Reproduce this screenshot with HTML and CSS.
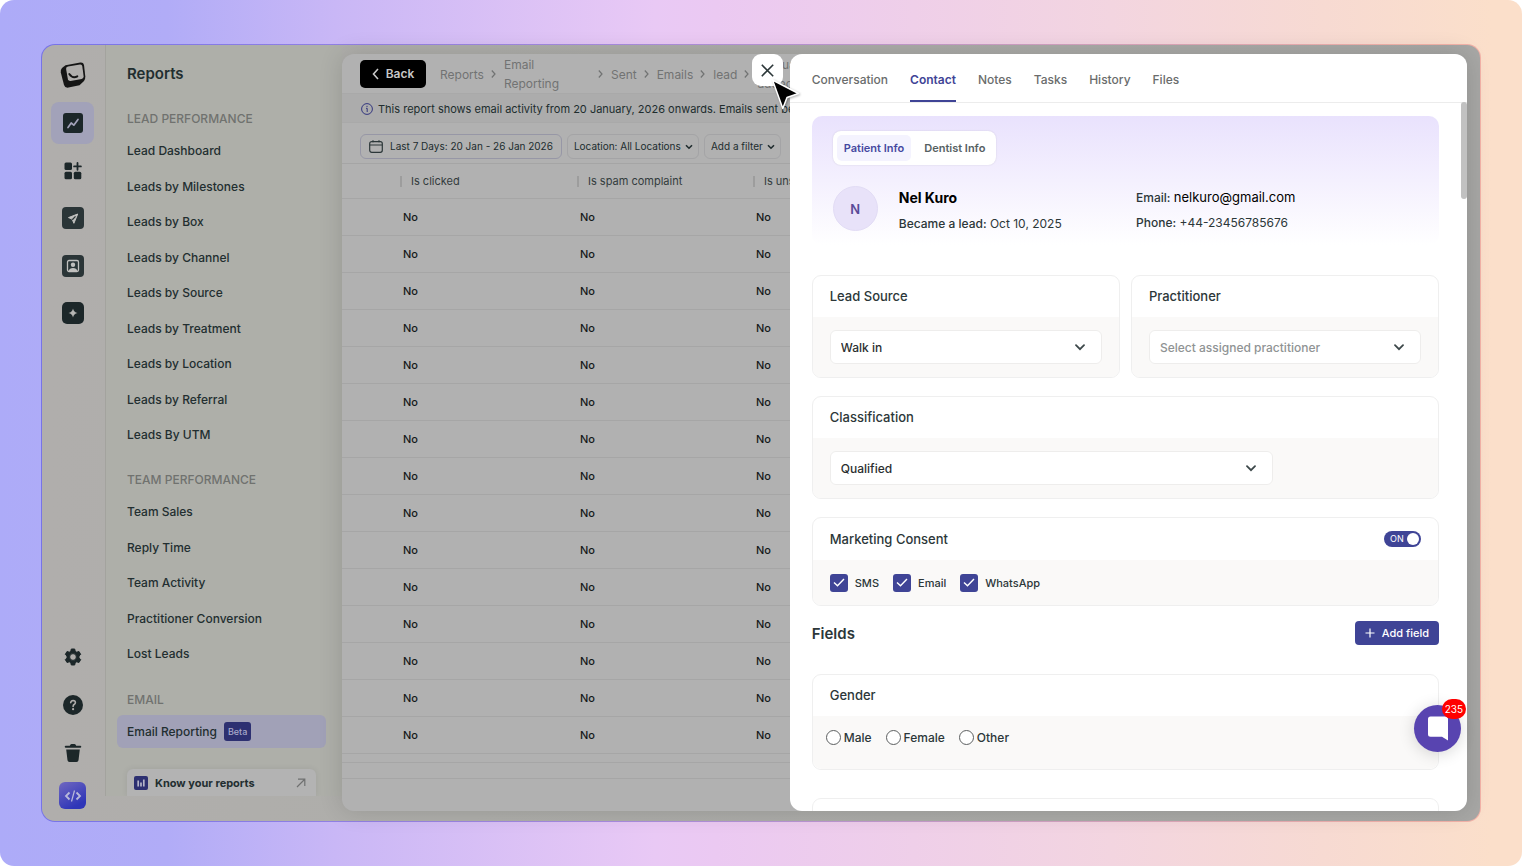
FILE: index.html
```html
<!DOCTYPE html>
<html lang="en">
<head>
<meta charset="utf-8">
<meta name="viewport" content="width=device-width, initial-scale=1">
<title>Reports</title>
<link rel="stylesheet" href="styles.css">
</head>
<body>
<div class="stage">
<div class="window">

<nav class="rail" aria-label="Main">
  <a class="rail-logo" href="#" aria-label="Home">
    <svg width="26" height="28" viewBox="0 0 26 28"><path d="M5.5 4.2 20.3 1.6Q23.3 1.2 24 4L25.3 15.500Q25.500 18 24 20L19.500 24.300 8.500 26.600Q5 27.200 4 24L.8 11.500Q.3 8.500 2 7Z" fill="#151515"/><path d="M8 5.600 20 3.500Q22 3.300 22.300 5.200L23.600 15.300Q23.700 17.500 21.700 18L10.500 20Q8.400 20.200 7.900 18.200L6.100 8Q6 6 8 5.600Z" fill="#b0aeac"/><path d="M9.300 13q3.500 5 8 2.300" fill="none" stroke="#151515" stroke-width="2" stroke-linecap="round"/></svg>
  </a>
  <div class="rail-top">
    <a class="rail-item is-active" href="#" aria-label="Reports">
      <svg width="20" height="20" viewBox="0 0 20 20"><rect width="20" height="20" rx="3" fill="#1c2729"/><path d="M5 14.500 8.200 10l2.600 2.200L15 6.500" fill="none" stroke="#a2a2b9" stroke-width="1.700" stroke-linecap="round" stroke-linejoin="round"/></svg>
    </a>
    <a class="rail-item" href="#" aria-label="Apps">
      <svg width="18" height="18" viewBox="0 0 18 18" fill="#1c2729"><rect x=".5" y=".5" width="7.500" height="7.500" rx="1.500"/><rect x=".5" y="9.800" width="7.500" height="7.500" rx="1.500"/><rect x="9.800" y="9.800" width="7.500" height="7.500" rx="1.500"/><path d="M13.500 1v6.800M10.100 4.400h6.800" stroke="#1c2729" stroke-width="1.800" stroke-linecap="round"/></svg>
    </a>
    <a class="rail-item" href="#" aria-label="Campaigns">
      <svg width="22" height="22" viewBox="0 0 22 22"><rect width="22" height="22" rx="4" fill="#2a3537"/><path d="M15.700 7 6.500 10.600l3.600 1.500 1.800 4.200Z" fill="#c0c0be" stroke="#c0c0be" stroke-linejoin="round"/><path d="m10.300 12.700 3.200-3.300" stroke="#2a3537" stroke-width="1.300"/></svg>
    </a>
    <a class="rail-item" href="#" aria-label="Contacts">
      <svg width="22" height="22" viewBox="0 0 22 22"><rect width="22" height="22" rx="4" fill="#2a3537"/><rect x="5.500" y="5.500" width="11" height="11" rx="1.500" fill="none" stroke="#c0c0be" stroke-width="1.300"/><circle cx="11" cy="9.800" r="2.200" fill="#c0c0be"/><path d="M6.500 16q1-3 4.500-3t4.500 3Z" fill="#c0c0be"/></svg>
    </a>
    <a class="rail-item" href="#" aria-label="Assistant">
      <svg width="22" height="22" viewBox="0 0 22 22"><rect width="22" height="22" rx="5" fill="#1c2729"/><path d="M11 6.500q.8 3.700 4.500 4.500-3.700.8-4.500 4.500-.8-3.700-4.500-4.500 3.700-.8 4.500-4.500Z" fill="#b5b5b3"/></svg>
    </a>
  </div>
  <div class="rail-bottom">
    <a class="rail-tool" href="#" aria-label="Settings">
      <svg width="18" height="18" viewBox="0 0 18 18"><path fill="#1c2729" fill-rule="evenodd" stroke="#1c2729" stroke-linejoin="round" d="M7.300 1h3.400l.5 2.300 1.500.9 2.300-.7 1.700 2.900-1.700 1.600v1.900l1.700 1.700-1.700 2.900-2.300-.7-1.500.9-.5 2.300H7.300l-.5-2.300-1.500-.9-2.300.7-1.700-2.900L3 9.900V8L1.300 6.400 3 3.500l2.300.7 1.500-.9ZM9 5.600a3.400 3.400 0 1 0 0 6.800 3.400 3.400 0 1 0 0-6.800Z"/></svg>
    </a>
    <a class="rail-tool" href="#" aria-label="Help">
      <svg width="20" height="20" viewBox="0 0 20 20"><circle cx="10" cy="10" r="10" fill="#1c2729"/><path d="M7.700 7.700q.3-2.200 2.400-2.200 2.300.1 2.300 2.100 0 1.200-1.300 1.900-1 .6-1 1.900" fill="none" stroke="#b0aeac" stroke-width="1.600" stroke-linecap="round"/><circle cx="10.100" cy="14.200" r="1.100" fill="#b0aeac"/></svg>
    </a>
    <a class="rail-tool" href="#" aria-label="Trash">
      <svg width="18" height="18" viewBox="0 0 18 18" fill="#1c2729"><path d="M2.200 5.500h13.600l-1.300 10.700q-.2 1.800-2 1.800h-7q-1.800 0-2-1.800Z"/><path d="M1.500 1.700h4.300Q6.300 0 7.500 0h3q1.200 0 1.700 1.700h4.300q.8.300.8 1t-.8 1h-15q-.8-.3-.8-1t.8-1Z"/></svg>
    </a>
    <a class="rail-code" href="#" aria-label="Developer">
      <svg width="18" height="14" viewBox="0 0 18 14" fill="none" stroke="#b9bada" stroke-width="1.800"><path d="M5.500 3.500 2 7l3.500 3.500M12.500 3.500 16 7l-3.500 3.500"/><path d="M10.500 1.500 7.500 12.500" stroke-width="1.200"/></svg>
    </a>
  </div>
</nav>

<aside class="sidebar">
  <h1 class="sidebar-title">Reports</h1>
  <h2 class="group-title">LEAD PERFORMANCE</h2>
  <ul class="group group-leads">
    <li><a href="#">Lead Dashboard</a></li>
    <li><a href="#">Leads by Milestones</a></li>
    <li><a href="#">Leads by Box</a></li>
    <li><a href="#">Leads by Channel</a></li>
    <li><a href="#">Leads by Source</a></li>
    <li><a href="#">Leads by Treatment</a></li>
    <li><a href="#">Leads by Location</a></li>
    <li><a href="#">Leads by Referral</a></li>
    <li><a href="#">Leads By UTM</a></li>
  </ul>
  <h2 class="group-title">TEAM PERFORMANCE</h2>
  <ul class="group group-team">
    <li><a href="#">Team Sales</a></li>
    <li><a href="#">Reply Time</a></li>
    <li><a href="#">Team Activity</a></li>
    <li><a href="#">Practitioner Conversion</a></li>
    <li><a href="#">Lost Leads</a></li>
  </ul>
  <h2 class="group-title">EMAIL</h2>
  <ul class="group group-email">
    <li><a class="is-active" href="#">Email Reporting <span class="beta">Beta</span></a></li>
  </ul>
  <a class="know" href="#">
    <svg width="14" height="14" viewBox="0 0 14 14"><rect width="14" height="14" rx="2" fill="#2d3071"/><path d="M4.200 4.500v6M7 6.500v4M9.800 3.500v7" stroke="#b5b5c8" stroke-width="1.700"/></svg>
    <span>Know your reports</span>
    <svg width="10" height="10" viewBox="0 0 10 10" fill="none" stroke="#6f7070" stroke-width="1.200"><path d="M1 9 8.500 1.500M2 1.200h6.800V8"/></svg>
  </a>
</aside>

<main class="report">
  <header class="crumbs">
    <button class="back" type="button"><svg width="7" height="12" viewBox="0 0 7 12" fill="none" stroke="#c8c8c8" stroke-width="1.600"><path d="M6 1 1.500 6 6 11"/></svg>Back</button>
    <a href="#">Reports</a>
    <svg class="sep" viewBox="0 0 5 8"><path d="m.8.500 3.200 3.500L.8 7.500"/></svg>
    <a class="crumb-wide" href="#">Email Reporting</a>
    <svg class="sep" viewBox="0 0 5 8"><path d="m.8.500 3.200 3.500L.8 7.500"/></svg>
    <a href="#">Sent</a>
    <svg class="sep" viewBox="0 0 5 8"><path d="m.8.500 3.200 3.500L.8 7.500"/></svg>
    <a href="#">Emails</a>
    <svg class="sep" viewBox="0 0 5 8"><path d="m.8.500 3.200 3.500L.8 7.500"/></svg>
    <a href="#">lead</a>
    <svg class="sep" viewBox="0 0 5 8"><path d="m.8.500 3.200 3.500L.8 7.500"/></svg>
    <a class="crumb-last" href="#">Manually added</a>
  </header>
  <p class="notice">
    <svg width="12" height="12" viewBox="0 0 12 12" fill="none" stroke="#33367f"><circle cx="6" cy="6" r="5.400"/><path d="M5 5.300h1.200V9M6 2.800v1.200"/></svg>
    <span>This report shows email activity from 20 January, 2026 onwards. Emails sent before</span>
  </p>
  <div class="filters">
    <button class="filter filter-date" type="button"><svg width="14" height="13" viewBox="0 0 14 13" fill="none" stroke="#2c3739" stroke-width="1.200"><rect x=".7" y="1.700" width="12.600" height="10.600" rx="2"/><path d="M.7 5h12.600M4 .2v2M10 .2v2"/></svg>Last 7 Days: 20 Jan - 26 Jan 2026</button>
    <span class="filter-pick filter-location">
      <select class="filter" aria-label="Location"><option>Location: All Locations</option></select>
      <svg class="mini-chev" viewBox="0 0 8 6"><path d="m1 1.200 3 3 3-3"/></svg>
    </span>
    <span class="filter-pick">
      <select class="filter" aria-label="Add a filter"><option>Add a filter</option></select>
      <svg class="mini-chev" viewBox="0 0 8 6"><path d="m1 1.200 3 3 3-3"/></svg>
    </span>
  </div>
  <table class="grid">
    <colgroup><col class="c-lead"><col class="c-a"><col class="c-b"><col></colgroup>
    <thead><tr><th></th><th><span>Is clicked</span></th><th><span>Is spam complaint</span></th><th><span>Is unsubscribed</span></th></tr></thead>
    <tbody>
      <tr><td></td><td>No</td><td>No</td><td>No</td></tr>
      <tr><td></td><td>No</td><td>No</td><td>No</td></tr>
      <tr><td></td><td>No</td><td>No</td><td>No</td></tr>
      <tr><td></td><td>No</td><td>No</td><td>No</td></tr>
      <tr><td></td><td>No</td><td>No</td><td>No</td></tr>
      <tr><td></td><td>No</td><td>No</td><td>No</td></tr>
      <tr><td></td><td>No</td><td>No</td><td>No</td></tr>
      <tr><td></td><td>No</td><td>No</td><td>No</td></tr>
      <tr><td></td><td>No</td><td>No</td><td>No</td></tr>
      <tr><td></td><td>No</td><td>No</td><td>No</td></tr>
      <tr><td></td><td>No</td><td>No</td><td>No</td></tr>
      <tr><td></td><td>No</td><td>No</td><td>No</td></tr>
      <tr><td></td><td>No</td><td>No</td><td>No</td></tr>
      <tr><td></td><td>No</td><td>No</td><td>No</td></tr>
      <tr><td></td><td>No</td><td>No</td><td>No</td></tr>
    </tbody>
  </table>
  <div class="grid-foot"></div>
</main>

<section class="drawer" aria-label="Lead details">
  <button class="close" type="button" aria-label="Close"><svg width="13" height="13" viewBox="0 0 13 13" stroke="#2c3739" stroke-width="1.600"><path d="m.8.800 11.400 11.400M12.200.8.800 12.200"/></svg></button>
  <svg class="cursor" width="34" height="38" viewBox="0 0 34 38"><path d="M4.500 4 30.500 17.500 19 21.500 14.800 32.500Z" fill="#000" stroke="#fff" stroke-width="1.500" stroke-linejoin="round"/></svg>
  <div class="drawer-panel">
  <nav class="tabs" aria-label="Lead sections">
    <a href="#">Conversation</a>
    <a class="is-active" href="#">Contact</a>
    <a href="#">Notes</a>
    <a href="#">Tasks</a>
    <a href="#">History</a>
    <a href="#">Files</a>
  </nav>
  <div class="drawer-body">
    <div class="hero">
      <div class="segment">
        <button class="is-active" type="button">Patient Info</button>
        <button type="button">Dentist Info</button>
      </div>
      <div class="person">
        <span class="avatar">N</span>
        <div class="facts">
          <h2>Nel Kuro</h2>
          <p><b>Became a lead:</b> Oct 10, 2025</p>
        </div>
        <div class="facts">
          <p><b>Email:</b> <span class="mail">nelkuro@gmail.com</span></p>
          <p><b>Phone:</b> +44-23456785676</p>
        </div>
      </div>
    </div>

    <div class="pair">
      <div class="card">
        <label class="card-head" for="source">Lead Source</label>
        <div class="card-body">
          <div class="select"><select id="source"><option>Walk in</option></select><svg class="chev" viewBox="0 0 10 7"><path d="m1 1.200 4 4 4-4"/></svg></div>
        </div>
      </div>
      <div class="card">
        <label class="card-head" for="practitioner">Practitioner</label>
        <div class="card-body">
          <div class="select is-empty"><select id="practitioner"><option>Select assigned practitioner</option></select><svg class="chev" viewBox="0 0 10 7"><path d="m1 1.200 4 4 4-4"/></svg></div>
        </div>
      </div>
    </div>

    <div class="card">
      <label class="card-head" for="class">Classification</label>
      <div class="card-body">
        <div class="select select-part"><select id="class"><option>Qualified</option></select><svg class="chev" viewBox="0 0 10 7"><path d="m1 1.200 4 4 4-4"/></svg></div>
      </div>
    </div>

    <div class="card consent">
      <label class="card-head">Marketing Consent
        <span class="switch"><input type="checkbox" role="switch" checked><span>ON</span></span>
      </label>
      <div class="card-body checks">
        <label><span class="tick"><input type="checkbox" checked><svg viewBox="0 0 12 9"><path d="m1 4.500 3.500 3.300L11 1"/></svg></span>SMS</label>
        <label><span class="tick"><input type="checkbox" checked><svg viewBox="0 0 12 9"><path d="m1 4.500 3.500 3.300L11 1"/></svg></span>Email</label>
        <label><span class="tick"><input type="checkbox" checked><svg viewBox="0 0 12 9"><path d="m1 4.500 3.500 3.300L11 1"/></svg></span>WhatsApp</label>
      </div>
    </div>

    <div class="fields">
      <h2>Fields</h2>
      <button class="add" type="button"><svg width="10" height="10" viewBox="0 0 10 10" stroke="#fff" stroke-width="1.200"><path d="M5 .5v9M.5 5h9"/></svg>Add field</button>
    </div>

    <fieldset class="card gender">
      <legend class="card-head">Gender</legend>
      <div class="card-body radios">
        <label><input type="radio" name="gender">Male</label>
        <label><input type="radio" name="gender">Female</label>
        <label><input type="radio" name="gender">Other</label>
      </div>
    </fieldset>

    <div class="card next"><div class="card-head"></div></div>
  </div>
  </div>
  <div class="thumb"></div>
  <button class="chat" type="button" aria-label="Chat">
    <svg width="22" height="25" viewBox="0 0 22 25"><path d="M3.500.5h15q2.500 0 2.500 2.500v21.500l-6-3.700H3.500Q1 20.800 1 18.300V3Q1 .5 3.500.500Z" fill="#fff"/></svg>
    <span class="count">235</span>
  </button>
</section>

</div>
</div>
</body>
</html>
```
FILE: styles.css
```css
* { box-sizing: border-box; }
body { margin: 0; background: #fff; font-family: Inter, "Liberation Sans", sans-serif; font-size: 12px; color: #2c3739; }
a { color: inherit; text-decoration: none; }
h1, h2, p, ul { margin: 0; padding: 0; }
ul { list-style: none; }
button, select, input { font: inherit; color: inherit; margin: 0; }
button { border: 0; padding: 0; background: none; cursor: pointer; }
svg { display: block; flex: none; }

.stage {
  height: 100vh; min-height: 866px; padding: 44px 41px; border-radius: 14px; display: flex;
  background: linear-gradient(90deg, #adabf8, #b1acf7 11%, #c9b7f6 22%, #e9c9f5 43%, #ebc9f2 47%, #f3d5e0 73%, #f7dad2 87%, #fbdfca 98%);
}
.window {
  position: relative; flex: 1; display: flex; padding-right: 13px; border: 1px solid transparent; border-radius: 14px;
  background:
    linear-gradient(90deg, #b0aeac, #aeaeaa 30%, #a7a7a5) padding-box,
    linear-gradient(90deg, #7773e8, #a98ce0 40%, #f3b2a8 95%) border-box;
}

/* icon rail */
.rail { width: 63px; flex: none; display: flex; flex-direction: column; align-items: center; padding: 16px 2px 12px 0; }
.rail-logo { height: 41px; }
.rail-top { height: 232px; display: flex; flex-direction: column; justify-content: space-between; }
.rail-item { width: 43px; height: 42px; border-radius: 8px; display: grid; place-items: center; }
.rail-item.is-active { background: #a2a2b9; }
.rail-bottom { margin-top: auto; display: flex; flex-direction: column; align-items: center; }
.rail-tool { width: 42px; height: 48px; display: grid; place-items: center; }
.rail-code { width: 27px; height: 27px; margin-top: 5px; border-radius: 6px; display: grid; place-items: center; background: linear-gradient(150deg, #7068c0, #2f36b8 80%); }

/* report list */
.sidebar {
  width: 237px; flex: none; display: flex; flex-direction: column; margin-bottom: 25px; padding: 0 16px 0 11px; overflow: hidden;
  background: #aeafa9; border-left: 1px solid #a3a39e; color: #222e30; font-weight: 500;
}
.sidebar-title { padding: 19px 10px 0; height: 60px; font-size: 15px; line-height: 20px; font-weight: 600; }
.group-title { padding: 0 10px; height: 28px; line-height: 28px; font-size: 12px; font-weight: 500; color: #70726f; }
.group { display: flex; flex-direction: column; margin-bottom: 14px; }
.group-leads { flex: 9 0 0; }
.group-team { flex: 5 0 0; }
.group-email { flex: 1 0 0; margin-bottom: 20px; }
.group li { flex: 1 0 35px; display: flex; }
.group a { flex: 1; display: flex; align-items: center; gap: 7px; padding: 0 10px; margin: 1px 0; border-radius: 6px; }
.group a.is-active { background: #a1a1b7; }
.beta { padding: 0 4px; height: 19px; line-height: 19px; border-radius: 3px; background: #2d3071; color: #a9a9cb; font-size: 9px; }
.know {
  flex: none; height: 27px; margin: 0 10px; padding: 1px 10px 0 7px; display: flex; align-items: center; gap: 7px; border-radius: 6px 6px 0 0;
  background: #b3b3b3; box-shadow: 0 0 6px rgba(0, 0, 0, .08); font-size: 11px; font-weight: 700;
}
.know span { flex: 1; }

/* report page */
.report {
  flex: 1; min-width: 0; margin: 9px 0 10px; border-radius: 12px; overflow: hidden; background: #b1b1b1;
  box-shadow: 0 0 24px rgba(0, 0, 0, .14);
}
.crumbs { height: 40px; padding-left: 18px; display: flex; align-items: center; line-height: 19px; color: #717373; border-bottom: 1px solid #a9a9a9; }
.crumbs a { flex: none; padding-top: 1px; }
.back { width: 66px; height: 28px; margin-right: 14px; border-radius: 5px; background: #000; color: #c8c8c8; display: flex; align-items: center; justify-content: center; gap: 7px; font-size: 12px; font-weight: 600; }
.sep { width: 5px; height: 8px; margin: 0 8px 0 7px; fill: none; stroke: #717373; stroke-width: 1.200; }
.crumb-wide { width: 87px; }
.crumbs .crumb-last { width: 60px; }
.notice { height: 29px; padding: 1px 0 0 19px; display: flex; align-items: center; gap: 5px; background: #acacac; border-bottom: 1px solid #a9a9a9; font-size: 11px; white-space: nowrap; color: #202c2e; }
.filters { height: 41px; padding: 6px 18px 0; display: flex; align-items: center; gap: 5px; border-bottom: 1px solid #a5a5a5; font-size: 10px; color: #202c2e; }
.filter { height: 25px; border: 1px solid #a4a4a6; border-radius: 6px; background: #b1b1b1; display: flex; align-items: center; gap: 7px; padding: 0 8px; white-space: nowrap; }
.filter-date { border-color: #9797a6; }
.filter-pick { position: relative; }
.filter-pick select { appearance: none; padding: 0 17px 0 6px; }
.mini-chev { position: absolute; right: 6px; top: 10px; width: 8px; height: 6px; fill: none; stroke: #202c2e; stroke-width: 1.600; pointer-events: none; }
.grid { width: 100%; table-layout: fixed; border-collapse: collapse; }
.c-lead { width: 58px; }
.c-a { width: 177px; }
.c-b { width: 176px; }
.grid th { height: 34px; padding: 1px 0 0; text-align: left; font-size: 11px; font-weight: 400; color: #333c3d; }
.grid th span { display: block; line-height: 11px; padding-left: 9px; border-left: 2px solid #9d9d9d; }
.grid td { height: 37px; padding: 0 0 0 3px; font-size: 11px; line-height: 14px; font-weight: 500; color: #15191a; }
.grid tr { border-bottom: 1px solid #a6a6a6; }
.grid-foot { height: 25px; border-bottom: 1px solid #a6a6a6; background: linear-gradient(#a6a6a6, #a6a6a6) 0 8px / 100% 1px no-repeat; }

/* lead drawer, laid over the report */
.drawer { position: absolute; top: 9px; bottom: 10px; left: 52%; right: 13px; }
.drawer-panel { height: 100%; border-radius: 12px; background: #fff; overflow: hidden; }
.close { position: absolute; left: -38px; top: 0; width: 31px; height: 32px; border-radius: 9px; background: #fff; display: grid; place-items: center; }
.cursor { position: absolute; left: -22px; top: 22px; filter: drop-shadow(1px 1px 1px rgba(0, 0, 0, .3)); }
.thumb { position: absolute; right: 0; top: 48px; width: 6px; height: 97px; border-radius: 3px; background: #c1c1c1; }
.tabs { height: 49px; padding-left: 22px; display: flex; gap: 22px; border-bottom: 1px solid #ececec; font-weight: 500; color: #6a6c6c; }
.tabs a { height: 48px; line-height: 52px; border-bottom: 2px solid transparent; }
.tabs a.is-active { color: #3f4496; border-color: #3f4496; font-weight: 600; }
.drawer-body { padding: 13px 28px 0 22px; }
.hero { height: 129px; margin-bottom: 30px; padding: 15px 21px 0; border-radius: 10px; background: linear-gradient(#e9e2fd, #f4f0fe 50%, #fff); }
.segment { width: fit-content; height: 34px; padding: 4px; border-radius: 8px; background: #fff; display: flex; box-shadow: 0 0 2px rgba(0, 0, 0, .12); }
.segment button { padding: 0 7px; border-radius: 5px; font-size: 11px; font-weight: 600; color: #566163; }
.segment button + button { margin-left: 6px; }
.segment .is-active { background: #f4f3fe; color: #4549a0; }
.person { margin-top: 21px; display: grid; grid-template-columns: 45px 1fr 282px; }
.avatar { width: 45px; height: 45px; border-radius: 50%; background: #e8e2f9; border: 1px solid #e2dcf5; color: #594b98; font-size: 13px; font-weight: 600; display: grid; place-items: center; }
.facts { margin: -1px 0 0 21px; font-size: 12px; line-height: 25px; white-space: nowrap; }
.facts + .facts { margin-left: 0; }
.facts h2 { font-size: 14px; line-height: 26px; font-weight: 700; color: #000; }
.facts b { font-weight: 500; }
.facts .mail { font-size: 13px; color: #000; }
.pair { display: grid; grid-template-columns: 1fr 1fr; gap: 11px; }
.card { display: block; margin: 0 0 18px; padding: 0; min-width: 0; border: 1px solid #efefef; border-radius: 9px; overflow: hidden; }
.card-head { height: 41px; padding: 0 17px 2px; display: flex; align-items: center; justify-content: space-between; font-size: 13px; font-weight: 500; }
legend.card-head { float: left; width: 100%; }
.card-body { clear: both; padding: 13px 17px; background: #faf9f8; }
.select { position: relative; }
.select-part { width: 75%; }
.select select { appearance: none; display: block; width: 100%; height: 34px; padding: 0 10px; border: 1px solid #eeedec; border-radius: 6px; background: #fff; font-size: 12px; font-weight: 500; color: #2b2f30; }
.select.is-empty select { color: #8f9394; }
.chev { position: absolute; right: 17px; top: 14px; width: 10px; height: 7px; fill: none; stroke: #3d484a; stroke-width: 1.800; stroke-linecap: round; pointer-events: none; }
.consent { margin-bottom: 15px; }
.consent .card-head { height: 42px; padding-bottom: 0; }
.checks { height: 45px; padding: 0 17px; display: flex; align-items: center; gap: 14px; font-size: 11px; font-weight: 500; }
.checks label { display: flex; align-items: center; gap: 7px; }
.tick { display: grid; width: 18px; height: 18px; place-items: center; }
.tick > * { grid-area: 1 / 1; }
.tick input { appearance: none; width: 18px; height: 18px; border-radius: 3px; background: #3f4496; }
.tick svg { z-index: 1; width: 12px; height: 9px; fill: none; stroke: #fff; stroke-width: 1.400; pointer-events: none; }
.switch { display: grid; align-items: center; width: 37px; height: 16px; }
.switch > * { grid-area: 1 / 1; }
.switch input { appearance: none; width: 37px; height: 16px; padding: 2px; border-radius: 8px; background: #3f4496; display: flex; justify-content: flex-end; }
.switch input::before { content: ""; width: 12px; height: 12px; border-radius: 50%; background: #fff; }
.switch span { z-index: 1; padding-left: 6px; font-size: 9px; line-height: 16px; font-weight: 400; color: #fff; }
.fields { height: 24px; margin-bottom: 29px; display: flex; align-items: center; justify-content: space-between; }
.fields h2 { font-size: 15px; font-weight: 600; }
.add { width: 84px; height: 24px; border-radius: 4px; background: #3f4496; color: #fff; display: flex; align-items: center; justify-content: center; gap: 7px; font-size: 11px; font-weight: 500; }
.gender { margin-bottom: 28px; }
.radios { height: 53px; padding: 14px 13px; display: flex; gap: 14px; font-size: 12px; font-weight: 500; }
.radios label { display: flex; align-items: center; gap: 3px; height: 15px; }
.radios input { appearance: none; width: 15px; height: 15px; border: 1px solid #5c5f60; border-radius: 50%; background: #fff; }
.chat { position: absolute; right: 6px; bottom: 59px; width: 47px; height: 47px; border-radius: 50%; background: #5844b0; display: grid; place-items: center; box-shadow: 0 2px 16px rgba(0, 0, 0, .16); }
.count { position: absolute; right: -5px; top: -6px; height: 20px; padding: 0 3px; border-radius: 10px; background: #f00; color: #fff; font-size: 10px; line-height: 20px; }
```
